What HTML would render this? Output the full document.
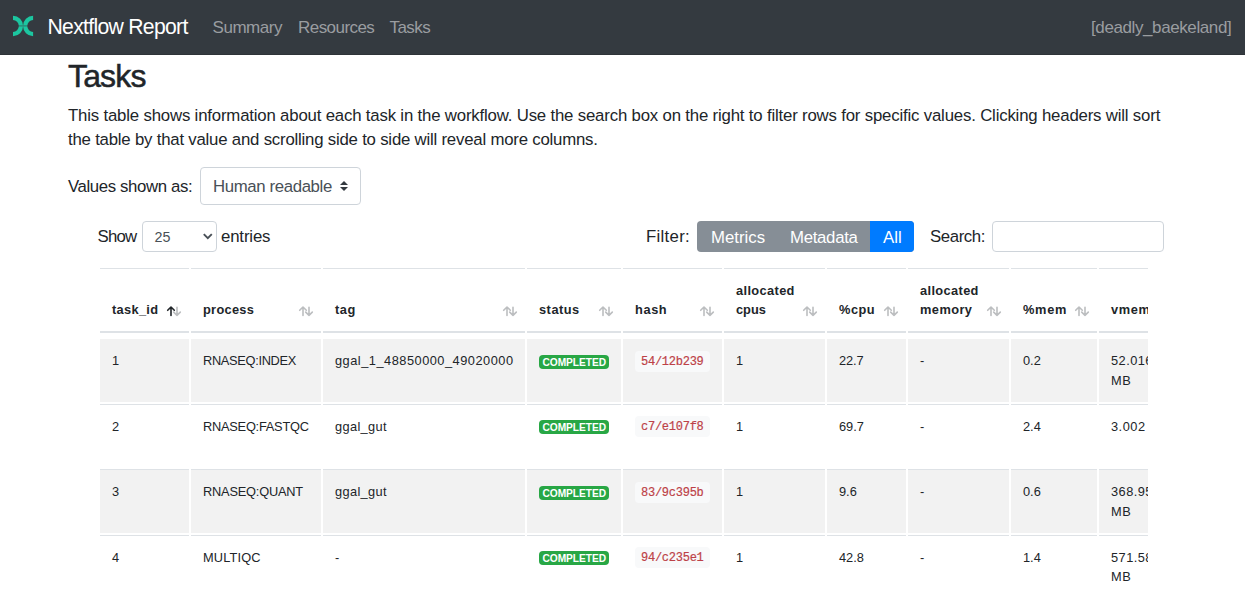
<!DOCTYPE html>
<html><head><meta charset="utf-8"><title>Nextflow Report</title>
<style>
html,body{margin:0;padding:0;background:#fff;width:1245px;height:591px;overflow:hidden;position:relative}
body{font-family:"Liberation Sans",sans-serif;color:#212529}
.t{position:absolute;white-space:nowrap}
.r{position:absolute}
.clip{position:absolute;left:0;top:0;width:1148px;height:591px;overflow:hidden}
</style></head><body>
<div class="r" style="left:0px;top:0px;width:1245px;height:55px;background:#343a40"></div>
<div class="r" style="left:0px;top:54px;width:1245px;height:1px;background:#2e3338"></div>
<svg class="r" style="left:0px;top:0px" width="46" height="52" viewBox="0 0 46 52">
<path d="M13 15.8 A10.1 10.2 0 0 1 13 36.2 L13 31.9 A5.8 5.9 0 0 0 13 20.1 Z" fill="#1cc6a0"/>
<path d="M33.1 15.8 A10.1 10.2 0 0 0 33.1 36.2 L33.1 31.9 A5.8 5.9 0 0 1 33.1 20.1 Z" fill="#1cc6a0"/>
<rect x="17" y="25.3" width="12" height="1.2" fill="#343a40" opacity="0.5"/>
</svg>
<div class="t" style="left:47.50px;top:16.05px;font-size:21.2px;line-height:21.2px;color:#fff;letter-spacing:-0.71px;">Nextflow Report</div>
<div class="t" style="left:212.50px;top:18.91px;font-size:17px;line-height:17px;color:#9a9da0;letter-spacing:-0.45px;">Summary</div>
<div class="t" style="left:298.00px;top:18.91px;font-size:17px;line-height:17px;color:#9a9da0;letter-spacing:-0.55px;">Resources</div>
<div class="t" style="left:389.50px;top:18.91px;font-size:17px;line-height:17px;color:#9a9da0;letter-spacing:-0.55px;">Tasks</div>
<div class="t" style="left:1091.00px;top:18.91px;font-size:17px;line-height:17px;color:#9a9da0;letter-spacing:-0.4px;">[deadly_baekeland]</div>
<div class="t" style="left:68.00px;top:60.41px;font-size:32px;line-height:32px;color:#212529;letter-spacing:-0.85px;-webkit-text-stroke:0.5px #212529;">Tasks</div>
<div class="t" style="left:68.00px;top:107.68px;font-size:16.8px;line-height:16.8px;color:#212529;letter-spacing:-0.18px;">This table shows information about each task in the workflow. Use the search box on the right to filter rows for specific values. Clicking headers will sort</div>
<div class="t" style="left:68.00px;top:131.68px;font-size:16.8px;line-height:16.8px;color:#212529;letter-spacing:-0.21px;">the table by that value and scrolling side to side will reveal more columns.</div>
<div class="t" style="left:68.00px;top:179.18px;font-size:16.8px;line-height:16.8px;color:#212529;letter-spacing:-0.38px;">Values shown as:</div>
<div class="r" style="left:200px;top:167px;width:161px;height:38px;box-sizing:border-box;border:1px solid #ced4da;border-radius:4px;background:#fff"></div>
<div class="t" style="left:213.00px;top:179.18px;font-size:16.8px;line-height:16.8px;color:#495057;letter-spacing:-0.37px;">Human readable</div>
<svg class="r" style="left:339px;top:180px" width="10" height="12" viewBox="0 0 10 12"><path d="M1 5 L5 1 L9 5 Z M1 7 L5 11 L9 7 Z" fill="#343a40"/></svg>
<div class="t" style="left:97.50px;top:228.98px;font-size:16.8px;line-height:16.8px;color:#212529;letter-spacing:-0.8px;">Show</div>
<div class="r" style="left:142px;top:221px;width:75px;height:31px;box-sizing:border-box;border:1px solid #ced4da;border-radius:4px;background:#fff"></div>
<div class="t" style="left:154.50px;top:229.79px;font-size:14.3px;line-height:14.3px;color:#495057;">25</div>
<svg class="r" style="left:202px;top:232px" width="11" height="8" viewBox="0 0 11 8"><path d="M1.8 2.2 L5.8 6.2 L9.8 2.2" fill="none" stroke="#495057" stroke-width="1.9"/></svg>
<div class="t" style="left:221.00px;top:228.98px;font-size:16.8px;line-height:16.8px;color:#212529;letter-spacing:-0.15px;">entries</div>
<div class="t" style="left:646.00px;top:229.28px;font-size:16.8px;line-height:16.8px;color:#212529;letter-spacing:0.3px;">Filter:</div>
<div class="r" style="left:697px;top:221px;width:217px;height:31px;background:#868e96;border-radius:4px"></div>
<div class="r" style="left:870px;top:221px;width:44px;height:31px;background:#007bff;border-radius:0 4px 4px 0"></div>
<div class="t" style="left:711.00px;top:229.68px;font-size:16.8px;line-height:16.8px;color:#fff;">Metrics</div>
<div class="t" style="left:790.00px;top:229.68px;font-size:16.8px;line-height:16.8px;color:#fff;letter-spacing:-0.3px;">Metadata</div>
<div class="t" style="left:883.00px;top:229.68px;font-size:16.8px;line-height:16.8px;color:#fff;">All</div>
<div class="t" style="left:930.00px;top:228.68px;font-size:16.8px;line-height:16.8px;color:#212529;letter-spacing:-0.4px;">Search:</div>
<div class="r" style="left:992px;top:221px;width:172px;height:31px;box-sizing:border-box;border:1px solid #ced4da;border-radius:4px;background:#fff"></div>
<div class="clip">
<div class="r" style="left:100px;top:268px;width:89px;height:1px;background:#dee2e6"></div>
<div class="r" style="left:100px;top:331px;width:89px;height:2px;background:#dee2e6"></div>
<div class="r" style="left:191px;top:268px;width:130px;height:1px;background:#dee2e6"></div>
<div class="r" style="left:191px;top:331px;width:130px;height:2px;background:#dee2e6"></div>
<div class="r" style="left:323px;top:268px;width:202px;height:1px;background:#dee2e6"></div>
<div class="r" style="left:323px;top:331px;width:202px;height:2px;background:#dee2e6"></div>
<div class="r" style="left:527px;top:268px;width:94px;height:1px;background:#dee2e6"></div>
<div class="r" style="left:527px;top:331px;width:94px;height:2px;background:#dee2e6"></div>
<div class="r" style="left:623px;top:268px;width:99px;height:1px;background:#dee2e6"></div>
<div class="r" style="left:623px;top:331px;width:99px;height:2px;background:#dee2e6"></div>
<div class="r" style="left:724px;top:268px;width:101px;height:1px;background:#dee2e6"></div>
<div class="r" style="left:724px;top:331px;width:101px;height:2px;background:#dee2e6"></div>
<div class="r" style="left:827px;top:268px;width:79px;height:1px;background:#dee2e6"></div>
<div class="r" style="left:827px;top:331px;width:79px;height:2px;background:#dee2e6"></div>
<div class="r" style="left:908px;top:268px;width:101px;height:1px;background:#dee2e6"></div>
<div class="r" style="left:908px;top:331px;width:101px;height:2px;background:#dee2e6"></div>
<div class="r" style="left:1011px;top:268px;width:86px;height:1px;background:#dee2e6"></div>
<div class="r" style="left:1011px;top:331px;width:86px;height:2px;background:#dee2e6"></div>
<div class="r" style="left:1099px;top:268px;width:101px;height:1px;background:#dee2e6"></div>
<div class="r" style="left:1099px;top:331px;width:101px;height:2px;background:#dee2e6"></div>
<div class="t" style="left:112.00px;top:304.06px;font-size:12.8px;line-height:12.8px;color:#212529;font-weight:700;letter-spacing:0.32px;">task_id</div>
<svg class="r" style="left:165.7px;top:301.6px" width="10" height="18" viewBox="0 0 10 18"><path d="M5 13.4 V5 M1.7 8.3 L5 5 L8.3 8.3" fill="none" stroke="#212529" stroke-width="1.6" stroke-linecap="round" stroke-linejoin="round"/></svg>
<svg class="r" style="left:172.2px;top:301.6px" width="10" height="18" viewBox="0 0 10 18"><path d="M5 5.2 V13.4 M1.7 10.1 L5 13.4 L8.3 10.1" fill="none" stroke="#bcbec0" stroke-width="1.6" stroke-linecap="round" stroke-linejoin="round"/></svg>
<div class="t" style="left:203.00px;top:304.06px;font-size:12.8px;line-height:12.8px;color:#212529;font-weight:700;letter-spacing:0.3px;">process</div>
<svg class="r" style="left:297.7px;top:301.6px" width="10" height="18" viewBox="0 0 10 18"><path d="M5 13.4 V5 M1.7 8.3 L5 5 L8.3 8.3" fill="none" stroke="#bcbec0" stroke-width="1.6" stroke-linecap="round" stroke-linejoin="round"/></svg>
<svg class="r" style="left:304.2px;top:301.6px" width="10" height="18" viewBox="0 0 10 18"><path d="M5 5.2 V13.4 M1.7 10.1 L5 13.4 L8.3 10.1" fill="none" stroke="#bcbec0" stroke-width="1.6" stroke-linecap="round" stroke-linejoin="round"/></svg>
<div class="t" style="left:335.00px;top:304.06px;font-size:12.8px;line-height:12.8px;color:#212529;font-weight:700;letter-spacing:0.6px;">tag</div>
<svg class="r" style="left:501.7px;top:301.6px" width="10" height="18" viewBox="0 0 10 18"><path d="M5 13.4 V5 M1.7 8.3 L5 5 L8.3 8.3" fill="none" stroke="#bcbec0" stroke-width="1.6" stroke-linecap="round" stroke-linejoin="round"/></svg>
<svg class="r" style="left:508.20000000000005px;top:301.6px" width="10" height="18" viewBox="0 0 10 18"><path d="M5 5.2 V13.4 M1.7 10.1 L5 13.4 L8.3 10.1" fill="none" stroke="#bcbec0" stroke-width="1.6" stroke-linecap="round" stroke-linejoin="round"/></svg>
<div class="t" style="left:539.00px;top:304.06px;font-size:12.8px;line-height:12.8px;color:#212529;font-weight:700;letter-spacing:0.5px;">status</div>
<svg class="r" style="left:597.7px;top:301.6px" width="10" height="18" viewBox="0 0 10 18"><path d="M5 13.4 V5 M1.7 8.3 L5 5 L8.3 8.3" fill="none" stroke="#bcbec0" stroke-width="1.6" stroke-linecap="round" stroke-linejoin="round"/></svg>
<svg class="r" style="left:604.2px;top:301.6px" width="10" height="18" viewBox="0 0 10 18"><path d="M5 5.2 V13.4 M1.7 10.1 L5 13.4 L8.3 10.1" fill="none" stroke="#bcbec0" stroke-width="1.6" stroke-linecap="round" stroke-linejoin="round"/></svg>
<div class="t" style="left:635.00px;top:304.06px;font-size:12.8px;line-height:12.8px;color:#212529;font-weight:700;letter-spacing:0.6px;">hash</div>
<svg class="r" style="left:698.7px;top:301.6px" width="10" height="18" viewBox="0 0 10 18"><path d="M5 13.4 V5 M1.7 8.3 L5 5 L8.3 8.3" fill="none" stroke="#bcbec0" stroke-width="1.6" stroke-linecap="round" stroke-linejoin="round"/></svg>
<svg class="r" style="left:705.2px;top:301.6px" width="10" height="18" viewBox="0 0 10 18"><path d="M5 5.2 V13.4 M1.7 10.1 L5 13.4 L8.3 10.1" fill="none" stroke="#bcbec0" stroke-width="1.6" stroke-linecap="round" stroke-linejoin="round"/></svg>
<div class="t" style="left:736.00px;top:284.86px;font-size:12.8px;line-height:12.8px;color:#212529;font-weight:700;letter-spacing:0.37px;">allocated</div>
<div class="t" style="left:736.00px;top:304.06px;font-size:12.8px;line-height:12.8px;color:#212529;font-weight:700;">cpus</div>
<svg class="r" style="left:801.7px;top:301.6px" width="10" height="18" viewBox="0 0 10 18"><path d="M5 13.4 V5 M1.7 8.3 L5 5 L8.3 8.3" fill="none" stroke="#bcbec0" stroke-width="1.6" stroke-linecap="round" stroke-linejoin="round"/></svg>
<svg class="r" style="left:808.2px;top:301.6px" width="10" height="18" viewBox="0 0 10 18"><path d="M5 5.2 V13.4 M1.7 10.1 L5 13.4 L8.3 10.1" fill="none" stroke="#bcbec0" stroke-width="1.6" stroke-linecap="round" stroke-linejoin="round"/></svg>
<div class="t" style="left:839.00px;top:304.06px;font-size:12.8px;line-height:12.8px;color:#212529;font-weight:700;letter-spacing:0.5px;">%cpu</div>
<svg class="r" style="left:882.7px;top:301.6px" width="10" height="18" viewBox="0 0 10 18"><path d="M5 13.4 V5 M1.7 8.3 L5 5 L8.3 8.3" fill="none" stroke="#bcbec0" stroke-width="1.6" stroke-linecap="round" stroke-linejoin="round"/></svg>
<svg class="r" style="left:889.2px;top:301.6px" width="10" height="18" viewBox="0 0 10 18"><path d="M5 5.2 V13.4 M1.7 10.1 L5 13.4 L8.3 10.1" fill="none" stroke="#bcbec0" stroke-width="1.6" stroke-linecap="round" stroke-linejoin="round"/></svg>
<div class="t" style="left:920.00px;top:284.86px;font-size:12.8px;line-height:12.8px;color:#212529;font-weight:700;letter-spacing:0.37px;">allocated</div>
<div class="t" style="left:920.00px;top:304.06px;font-size:12.8px;line-height:12.8px;color:#212529;font-weight:700;letter-spacing:0.44px;">memory</div>
<svg class="r" style="left:985.7px;top:301.6px" width="10" height="18" viewBox="0 0 10 18"><path d="M5 13.4 V5 M1.7 8.3 L5 5 L8.3 8.3" fill="none" stroke="#bcbec0" stroke-width="1.6" stroke-linecap="round" stroke-linejoin="round"/></svg>
<svg class="r" style="left:992.2px;top:301.6px" width="10" height="18" viewBox="0 0 10 18"><path d="M5 5.2 V13.4 M1.7 10.1 L5 13.4 L8.3 10.1" fill="none" stroke="#bcbec0" stroke-width="1.6" stroke-linecap="round" stroke-linejoin="round"/></svg>
<div class="t" style="left:1023.00px;top:304.06px;font-size:12.8px;line-height:12.8px;color:#212529;font-weight:700;letter-spacing:0.7px;">%mem</div>
<svg class="r" style="left:1073.7px;top:301.6px" width="10" height="18" viewBox="0 0 10 18"><path d="M5 13.4 V5 M1.7 8.3 L5 5 L8.3 8.3" fill="none" stroke="#bcbec0" stroke-width="1.6" stroke-linecap="round" stroke-linejoin="round"/></svg>
<svg class="r" style="left:1080.2px;top:301.6px" width="10" height="18" viewBox="0 0 10 18"><path d="M5 5.2 V13.4 M1.7 10.1 L5 13.4 L8.3 10.1" fill="none" stroke="#bcbec0" stroke-width="1.6" stroke-linecap="round" stroke-linejoin="round"/></svg>
<div class="t" style="left:1111.00px;top:304.06px;font-size:12.8px;line-height:12.8px;color:#212529;font-weight:700;letter-spacing:0.6px;">vmem</div>
<svg class="r" style="left:1176.7px;top:301.6px" width="10" height="18" viewBox="0 0 10 18"><path d="M5 13.4 V5 M1.7 8.3 L5 5 L8.3 8.3" fill="none" stroke="#bcbec0" stroke-width="1.6" stroke-linecap="round" stroke-linejoin="round"/></svg>
<svg class="r" style="left:1183.2px;top:301.6px" width="10" height="18" viewBox="0 0 10 18"><path d="M5 5.2 V13.4 M1.7 10.1 L5 13.4 L8.3 10.1" fill="none" stroke="#bcbec0" stroke-width="1.6" stroke-linecap="round" stroke-linejoin="round"/></svg>
<div class="r" style="left:100px;top:339px;width:89px;height:63px;background:#f2f2f2"></div>
<div class="r" style="left:191px;top:339px;width:130px;height:63px;background:#f2f2f2"></div>
<div class="r" style="left:323px;top:339px;width:202px;height:63px;background:#f2f2f2"></div>
<div class="r" style="left:527px;top:339px;width:94px;height:63px;background:#f2f2f2"></div>
<div class="r" style="left:623px;top:339px;width:99px;height:63px;background:#f2f2f2"></div>
<div class="r" style="left:724px;top:339px;width:101px;height:63px;background:#f2f2f2"></div>
<div class="r" style="left:827px;top:339px;width:79px;height:63px;background:#f2f2f2"></div>
<div class="r" style="left:908px;top:339px;width:101px;height:63px;background:#f2f2f2"></div>
<div class="r" style="left:1011px;top:339px;width:86px;height:63px;background:#f2f2f2"></div>
<div class="r" style="left:1099px;top:339px;width:101px;height:63px;background:#f2f2f2"></div>
<div class="t" style="left:112.00px;top:355.06px;font-size:12.8px;line-height:12.8px;color:#212529;">1</div>
<div class="t" style="left:203.00px;top:355.06px;font-size:12.8px;line-height:12.8px;color:#212529;letter-spacing:-0.31px;">RNASEQ:INDEX</div>
<div class="t" style="left:335.00px;top:355.06px;font-size:12.8px;line-height:12.8px;color:#212529;letter-spacing:0.5px;">ggal_1_48850000_49020000</div>
<div class="r" style="left:539px;top:355px;width:70px;height:14px;background:#28a745;border-radius:4px"></div>
<div class="t" style="left:542.50px;top:357.66px;font-size:10.2px;line-height:10.2px;color:#fff;font-weight:700;letter-spacing:-0.05px;">COMPLETED</div>
<div class="r" style="left:635px;top:351px;width:75px;height:21px;background:#f8f9fa;border-radius:4px"></div>
<div class="t" style="left:641.00px;top:355.50px;font-size:12px;line-height:12px;color:#bd4147;letter-spacing:-0.25px;font-family:'Liberation Mono',monospace;-webkit-text-stroke:0.18px #bd4147;transform:scaleY(1.14);transform-origin:0 9.6px;">54/12b239</div>
<div class="t" style="left:736.00px;top:355.06px;font-size:12.8px;line-height:12.8px;color:#212529;">1</div>
<div class="t" style="left:839.00px;top:355.06px;font-size:12.8px;line-height:12.8px;color:#212529;letter-spacing:-0.1px;">22.7</div>
<div class="t" style="left:920.00px;top:355.06px;font-size:12.8px;line-height:12.8px;color:#212529;">-</div>
<div class="t" style="left:1023.00px;top:355.06px;font-size:12.8px;line-height:12.8px;color:#212529;">0.2</div>
<div class="t" style="left:1111.00px;top:355.06px;font-size:12.8px;line-height:12.8px;color:#212529;letter-spacing:0.45px;">52.016</div>
<div class="t" style="left:1111.00px;top:374.66px;font-size:12.8px;line-height:12.8px;color:#212529;letter-spacing:0.5px;">MB</div>
<div class="r" style="left:100px;top:404px;width:89px;height:1px;background:#dee2e6"></div>
<div class="r" style="left:191px;top:404px;width:130px;height:1px;background:#dee2e6"></div>
<div class="r" style="left:323px;top:404px;width:202px;height:1px;background:#dee2e6"></div>
<div class="r" style="left:527px;top:404px;width:94px;height:1px;background:#dee2e6"></div>
<div class="r" style="left:623px;top:404px;width:99px;height:1px;background:#dee2e6"></div>
<div class="r" style="left:724px;top:404px;width:101px;height:1px;background:#dee2e6"></div>
<div class="r" style="left:827px;top:404px;width:79px;height:1px;background:#dee2e6"></div>
<div class="r" style="left:908px;top:404px;width:101px;height:1px;background:#dee2e6"></div>
<div class="r" style="left:1011px;top:404px;width:86px;height:1px;background:#dee2e6"></div>
<div class="r" style="left:1099px;top:404px;width:101px;height:1px;background:#dee2e6"></div>
<div class="t" style="left:112.00px;top:420.86px;font-size:12.8px;line-height:12.8px;color:#212529;">2</div>
<div class="t" style="left:203.00px;top:420.86px;font-size:12.8px;line-height:12.8px;color:#212529;letter-spacing:-0.24px;">RNASEQ:FASTQC</div>
<div class="t" style="left:335.00px;top:420.86px;font-size:12.8px;line-height:12.8px;color:#212529;letter-spacing:0.35px;">ggal_gut</div>
<div class="r" style="left:539px;top:420px;width:70px;height:14px;background:#28a745;border-radius:4px"></div>
<div class="t" style="left:542.50px;top:423.46px;font-size:10.2px;line-height:10.2px;color:#fff;font-weight:700;letter-spacing:-0.05px;">COMPLETED</div>
<div class="r" style="left:635px;top:416px;width:75px;height:21px;background:#f8f9fa;border-radius:4px"></div>
<div class="t" style="left:641.00px;top:421.30px;font-size:12px;line-height:12px;color:#bd4147;letter-spacing:-0.25px;font-family:'Liberation Mono',monospace;-webkit-text-stroke:0.18px #bd4147;transform:scaleY(1.14);transform-origin:0 9.6px;">c7/e107f8</div>
<div class="t" style="left:736.00px;top:420.86px;font-size:12.8px;line-height:12.8px;color:#212529;">1</div>
<div class="t" style="left:839.00px;top:420.86px;font-size:12.8px;line-height:12.8px;color:#212529;">69.7</div>
<div class="t" style="left:920.00px;top:420.86px;font-size:12.8px;line-height:12.8px;color:#212529;">-</div>
<div class="t" style="left:1023.00px;top:420.86px;font-size:12.8px;line-height:12.8px;color:#212529;">2.4</div>
<div class="t" style="left:1111.00px;top:420.86px;font-size:12.8px;line-height:12.8px;color:#212529;letter-spacing:0.5px;">3.002</div>
<div class="r" style="left:100px;top:470px;width:89px;height:63px;background:#f2f2f2"></div>
<div class="r" style="left:191px;top:470px;width:130px;height:63px;background:#f2f2f2"></div>
<div class="r" style="left:323px;top:470px;width:202px;height:63px;background:#f2f2f2"></div>
<div class="r" style="left:527px;top:470px;width:94px;height:63px;background:#f2f2f2"></div>
<div class="r" style="left:623px;top:470px;width:99px;height:63px;background:#f2f2f2"></div>
<div class="r" style="left:724px;top:470px;width:101px;height:63px;background:#f2f2f2"></div>
<div class="r" style="left:827px;top:470px;width:79px;height:63px;background:#f2f2f2"></div>
<div class="r" style="left:908px;top:470px;width:101px;height:63px;background:#f2f2f2"></div>
<div class="r" style="left:1011px;top:470px;width:86px;height:63px;background:#f2f2f2"></div>
<div class="r" style="left:1099px;top:470px;width:101px;height:63px;background:#f2f2f2"></div>
<div class="r" style="left:100px;top:469px;width:89px;height:1px;background:#dee2e6"></div>
<div class="r" style="left:191px;top:469px;width:130px;height:1px;background:#dee2e6"></div>
<div class="r" style="left:323px;top:469px;width:202px;height:1px;background:#dee2e6"></div>
<div class="r" style="left:527px;top:469px;width:94px;height:1px;background:#dee2e6"></div>
<div class="r" style="left:623px;top:469px;width:99px;height:1px;background:#dee2e6"></div>
<div class="r" style="left:724px;top:469px;width:101px;height:1px;background:#dee2e6"></div>
<div class="r" style="left:827px;top:469px;width:79px;height:1px;background:#dee2e6"></div>
<div class="r" style="left:908px;top:469px;width:101px;height:1px;background:#dee2e6"></div>
<div class="r" style="left:1011px;top:469px;width:86px;height:1px;background:#dee2e6"></div>
<div class="r" style="left:1099px;top:469px;width:101px;height:1px;background:#dee2e6"></div>
<div class="t" style="left:112.00px;top:486.06px;font-size:12.8px;line-height:12.8px;color:#212529;">3</div>
<div class="t" style="left:203.00px;top:486.06px;font-size:12.8px;line-height:12.8px;color:#212529;letter-spacing:-0.2px;">RNASEQ:QUANT</div>
<div class="t" style="left:335.00px;top:486.06px;font-size:12.8px;line-height:12.8px;color:#212529;letter-spacing:0.35px;">ggal_gut</div>
<div class="r" style="left:539px;top:486px;width:70px;height:14px;background:#28a745;border-radius:4px"></div>
<div class="t" style="left:542.50px;top:488.66px;font-size:10.2px;line-height:10.2px;color:#fff;font-weight:700;letter-spacing:-0.05px;">COMPLETED</div>
<div class="r" style="left:635px;top:482px;width:75px;height:21px;background:#f8f9fa;border-radius:4px"></div>
<div class="t" style="left:641.00px;top:486.50px;font-size:12px;line-height:12px;color:#bd4147;letter-spacing:-0.25px;font-family:'Liberation Mono',monospace;-webkit-text-stroke:0.18px #bd4147;transform:scaleY(1.14);transform-origin:0 9.6px;">83/9c395b</div>
<div class="t" style="left:736.00px;top:486.06px;font-size:12.8px;line-height:12.8px;color:#212529;">1</div>
<div class="t" style="left:839.00px;top:486.06px;font-size:12.8px;line-height:12.8px;color:#212529;">9.6</div>
<div class="t" style="left:920.00px;top:486.06px;font-size:12.8px;line-height:12.8px;color:#212529;">-</div>
<div class="t" style="left:1023.00px;top:486.06px;font-size:12.8px;line-height:12.8px;color:#212529;">0.6</div>
<div class="t" style="left:1111.00px;top:486.06px;font-size:12.8px;line-height:12.8px;color:#212529;letter-spacing:0.45px;">368.95</div>
<div class="t" style="left:1111.00px;top:505.66px;font-size:12.8px;line-height:12.8px;color:#212529;letter-spacing:0.5px;">MB</div>
<div class="r" style="left:100px;top:535px;width:89px;height:1px;background:#dee2e6"></div>
<div class="r" style="left:191px;top:535px;width:130px;height:1px;background:#dee2e6"></div>
<div class="r" style="left:323px;top:535px;width:202px;height:1px;background:#dee2e6"></div>
<div class="r" style="left:527px;top:535px;width:94px;height:1px;background:#dee2e6"></div>
<div class="r" style="left:623px;top:535px;width:99px;height:1px;background:#dee2e6"></div>
<div class="r" style="left:724px;top:535px;width:101px;height:1px;background:#dee2e6"></div>
<div class="r" style="left:827px;top:535px;width:79px;height:1px;background:#dee2e6"></div>
<div class="r" style="left:908px;top:535px;width:101px;height:1px;background:#dee2e6"></div>
<div class="r" style="left:1011px;top:535px;width:86px;height:1px;background:#dee2e6"></div>
<div class="r" style="left:1099px;top:535px;width:101px;height:1px;background:#dee2e6"></div>
<div class="t" style="left:112.00px;top:551.66px;font-size:12.8px;line-height:12.8px;color:#212529;">4</div>
<div class="t" style="left:203.00px;top:551.66px;font-size:12.8px;line-height:12.8px;color:#212529;letter-spacing:0.15px;">MULTIQC</div>
<div class="t" style="left:335.00px;top:551.66px;font-size:12.8px;line-height:12.8px;color:#212529;">-</div>
<div class="r" style="left:539px;top:551px;width:70px;height:14px;background:#28a745;border-radius:4px"></div>
<div class="t" style="left:542.50px;top:554.26px;font-size:10.2px;line-height:10.2px;color:#fff;font-weight:700;letter-spacing:-0.05px;">COMPLETED</div>
<div class="r" style="left:635px;top:547px;width:75px;height:21px;background:#f8f9fa;border-radius:4px"></div>
<div class="t" style="left:641.00px;top:552.10px;font-size:12px;line-height:12px;color:#bd4147;letter-spacing:-0.25px;font-family:'Liberation Mono',monospace;-webkit-text-stroke:0.18px #bd4147;transform:scaleY(1.14);transform-origin:0 9.6px;">94/c235e1</div>
<div class="t" style="left:736.00px;top:551.66px;font-size:12.8px;line-height:12.8px;color:#212529;">1</div>
<div class="t" style="left:839.00px;top:551.66px;font-size:12.8px;line-height:12.8px;color:#212529;">42.8</div>
<div class="t" style="left:920.00px;top:551.66px;font-size:12.8px;line-height:12.8px;color:#212529;">-</div>
<div class="t" style="left:1023.00px;top:551.66px;font-size:12.8px;line-height:12.8px;color:#212529;">1.4</div>
<div class="t" style="left:1111.00px;top:551.66px;font-size:12.8px;line-height:12.8px;color:#212529;letter-spacing:0.45px;">571.58</div>
<div class="t" style="left:1111.00px;top:571.26px;font-size:12.8px;line-height:12.8px;color:#212529;letter-spacing:0.5px;">MB</div>
</div>
</body></html>
